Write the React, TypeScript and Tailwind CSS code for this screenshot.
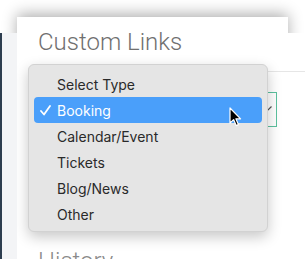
import React from 'react';

const items = ['Select Type', 'Booking', 'Calendar/Event', 'Tickets', 'Blog/News', 'Other'];

const Check = () => (
  <svg width="11" height="11" viewBox="0 0 11 11" className="absolute left-[6px] top-[8px]">
    <polyline points="1,6 4,9.5 10,1" fill="none" stroke="white" strokeWidth="1.8" strokeLinecap="round" strokeLinejoin="round" />
  </svg>
);

const Cursor = () => (
  <svg width="14" height="21" viewBox="0 0 14 21" className="absolute left-[229px] top-[107px] z-30">
    <path d="M1 1 L1 16 L4.6 12.6 L7.2 18.6 L9.4 17.6 L6.9 11.8 L11.6 11.8 Z" fill="black" stroke="white" strokeWidth="1.2" strokeLinejoin="round" />
  </svg>
);

export default function App() {
  return (
    <div className="relative w-[305px] h-[259px] overflow-hidden bg-white font-['Inter',sans-serif]">
      {/* window card */}
      <div className="absolute left-[17px] top-[17px] w-[271px] h-[260px] bg-white pt-[11px] pl-[21px] shadow-[0_-3px_14px_rgba(0,0,0,0.32)]">
        <h2 className="text-[24px] leading-[28px] font-light text-[#707070] font-['Roboto','Liberation_Sans',sans-serif]">Custom Links</h2>
        <div className="mt-[15px] flex justify-end">
          <div className="w-[120px] border-t border-[#e6e6e6] pt-[20px] pr-[11px]">
            <div className="relative h-[35px] border border-[#5cc19f]">
              <svg width="8" height="5" viewBox="0 0 8 5" className="absolute right-[4px] top-[13px]">
                <polyline points="0.5,0.5 4,4 7.5,0.5" fill="none" stroke="#555" strokeWidth="1.2" />
              </svg>
            </div>
          </div>
        </div>
        <h2 className="mt-[120px] text-[24px] leading-[28px] font-light text-[#8a8a8a] font-['Roboto','Liberation_Sans',sans-serif]">History</h2>

        {/* dropdown menu */}
        <div className="absolute left-[11px] top-[47px] w-[240px] h-[168px] rounded-[6px] bg-[#e5e5e5] border border-[#d2d2d2] px-[5px] pt-[6px] pb-[5px] shadow-[0_5px_14px_rgba(0,0,0,0.22)]">
          {items.map((item) => (
            <div
              key={item}
              className={`relative h-[26px] rounded-[4px] pl-[23px] flex items-center text-[14px] ${item === 'Booking' ? 'bg-[#4a9ffa] text-white' : 'text-[#2a2a2a]'}`}
            >
              {item === 'Booking' && <Check />}
              {item}
            </div>
          ))}
        </div>
      </div>

      {/* app behind */}
      <div className="relative z-10 mt-[33px] flex h-[226px]">
        <div className="w-[2px] bg-[#2d3d4f]" />
        <div className="w-[15px] bg-[#f3f4f6]" />
        <div className="w-[271px]" />
        <div className="flex-1 bg-white">
          <div className="mt-[38px] border-t border-[#e6e6e6]" />
        </div>
      </div>

      <Cursor />
    </div>
  );
}
